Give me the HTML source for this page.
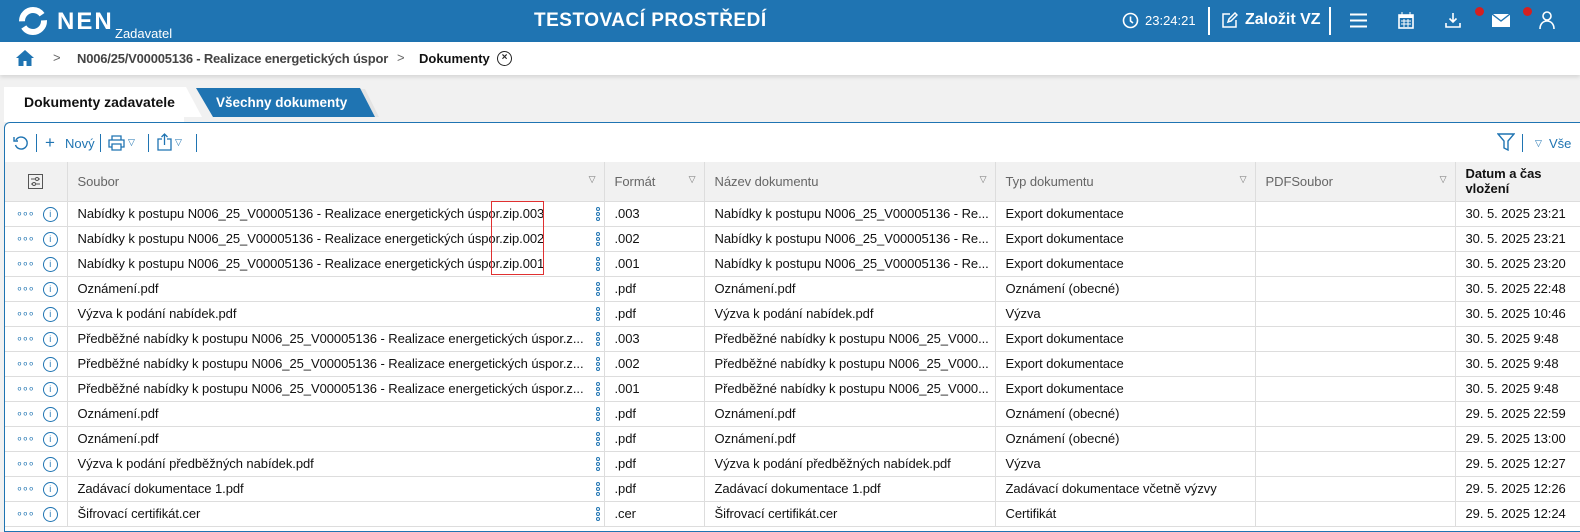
<!DOCTYPE html>
<html><head><meta charset="utf-8"><style>
*{box-sizing:border-box;margin:0;padding:0}
body{width:1580px;height:529px;overflow:hidden;background:#f1f1f1;font-family:"Liberation Sans",sans-serif;position:relative;color:#111}
.hdr{position:absolute;left:0;top:0;width:1580px;height:42px;background:#1f74b2;color:#fff}
.bc{position:absolute;left:0;top:42px;width:1580px;height:33px;background:#fff;box-shadow:0 2px 4px rgba(0,0,0,.12);font-size:13px;font-weight:bold;color:#444}
.abs{position:absolute;white-space:nowrap}
.panel{position:absolute;left:4px;top:122px;width:1580px;height:410px;background:#fff;border:1px solid #1f74b2;border-right:none;border-radius:6px 0 0 0}
table{position:absolute;left:5px;top:162px;width:1591px;border-collapse:collapse;table-layout:fixed;font-size:13px;letter-spacing:-0.06px}
td{height:25px;border-bottom:1px solid #ddd;border-right:1px solid #ddd;padding:0 0 0 10px;white-space:nowrap;overflow:hidden;position:relative}
tr.h td{height:39px;background:#f1f1f1;color:#666;border-bottom:1px solid #ddd}
.tri{position:absolute;right:8px;top:12px;font-size:9px;color:#777}
.dots{color:#1f74b2;font-size:11px;letter-spacing:-1px}
.info{display:inline-block;width:15px;height:15px;border:1px solid #1f74b2;border-radius:50%;font-size:9px;color:#1f74b2;text-align:center;line-height:13px;vertical-align:middle;margin-left:9px}
.vd{position:absolute;right:4px;top:5px;width:4px}
.vd i{display:block;width:4px;height:4px;border:1px solid #1f74b2;border-radius:50%;margin-bottom:1px}
</style></head><body>
<div class="hdr">
 <svg class="abs" style="left:18px;top:6px" width="30" height="30" viewBox="0 0 30 30"><circle cx="15" cy="15" r="11" fill="none" stroke="#fff" stroke-width="6" stroke-dasharray="28 6"/></svg>
 <div class="abs" style="left:57px;top:8px;font-size:24px;font-weight:bold;letter-spacing:2px">NEN</div>
 <div class="abs" style="left:115px;top:26px;font-size:13px">Zadavatel</div>
 <div class="abs" style="left:534px;top:10px;font-size:19px;font-weight:bold;letter-spacing:.5px">TESTOVACÍ PROSTŘEDÍ</div>
 <svg class="abs" style="left:1122px;top:12px" width="17" height="17" viewBox="0 0 17 17"><circle cx="8.5" cy="8.5" r="7" fill="none" stroke="#fff" stroke-width="1.6"/><path d="M8.5 4.5v4.5l2.5 2" fill="none" stroke="#fff" stroke-width="1.6"/></svg>
 <div class="abs" style="left:1145px;top:13px;font-size:13px">23:24:21</div>
 <div class="abs" style="left:1208px;top:7px;width:2px;height:28px;background:#fff"></div>
 <svg class="abs" style="left:1221px;top:12px" width="17" height="17" viewBox="0 0 17 17"><path d="M9 2H2v13h13V8M7 10l1-3 6-6 2 2-6 6z" fill="none" stroke="#fff" stroke-width="1.5"/></svg>
 <div class="abs" style="left:1245px;top:11px;font-size:16px;font-weight:bold">Založit VZ</div>
 <div class="abs" style="left:1329px;top:7px;width:2px;height:28px;background:#fff"></div>
 <svg class="abs" style="left:1350px;top:13px" width="17" height="15"><path d="M0 1.5h17M0 7.5h17M0 13.5h17" stroke="#fff" stroke-width="2"/></svg>
 <svg class="abs" style="left:1398px;top:12px" width="16" height="17"><rect x="1" y="3" width="14" height="13" fill="none" stroke="#fff" stroke-width="1.6"/><rect x="1" y="3" width="14" height="3" fill="#fff"/><path d="M4 0v4M12 0v4M3 9h10M3 12h10M6 7v8M10 7v8" stroke="#fff" stroke-width="1"/></svg>
 <svg class="abs" style="left:1445px;top:12px" width="16" height="17"><path d="M8 1v9M4.5 6.5L8 10l3.5-3.5M1 11v4h14v-4" fill="none" stroke="#fff" stroke-width="1.6"/></svg>
 <div class="abs" style="left:1475px;top:7px;width:9px;height:9px;border-radius:50%;background:#d42020"></div>
 <svg class="abs" style="left:1492px;top:14px" width="18" height="13"><rect x="0" y="0" width="18" height="13" fill="#fff"/><path d="M0 0l9 7 9-7" fill="none" stroke="#1f74b2" stroke-width="1.3"/></svg>
 <div class="abs" style="left:1523px;top:7px;width:9px;height:9px;border-radius:50%;background:#d42020"></div>
 <svg class="abs" style="left:1539px;top:11px" width="16" height="18"><circle cx="8" cy="5" r="4" fill="none" stroke="#fff" stroke-width="1.6"/><path d="M1 18c0-5 3-8 7-8s7 3 7 8" fill="none" stroke="#fff" stroke-width="1.6"/></svg>
</div>
<div class="bc">
 <svg class="abs" style="left:16px;top:8px" width="18" height="16"><path d="M9 0L0 8h2.5v8h5v-5h3v5h5V8H18z" fill="#1f74b2"/></svg>
 <div class="abs" style="left:53px;top:8px;color:#666;font-weight:normal">&gt;</div>
 <div class="abs" style="left:77px;top:9px;letter-spacing:-0.2px">N006/25/V00005136 - Realizace energetických úspor</div>
 <div class="abs" style="left:397px;top:8px;color:#666;font-weight:normal">&gt;</div>
 <div class="abs" style="left:419px;top:9px;color:#111">Dokumenty</div>
 <div class="abs" style="left:497px;top:9px;width:15px;height:15px;border:1.5px solid #222;border-radius:50%;font-size:10px;text-align:center;line-height:12px;color:#222">×</div>
</div>
<div class="abs" style="left:4px;top:87px;width:180px;height:35px;background:#fff"></div>
<svg class="abs" style="left:180px;top:87px" width="200" height="31"><polygon points="0,0 6,0 22,30 0,30" fill="#fff"/><polygon points="17,2 185,2 199,30 33,30" fill="#e4e4e4"/><polygon points="16,1 180,1 195,30 33,30" fill="#1f74b2"/></svg>
<div class="abs" style="left:24px;top:94px;font-size:14px;font-weight:bold">Dokumenty zadavatele</div>
<div class="abs" style="left:216px;top:95px;font-size:13.5px;font-weight:bold;color:#fff">Všechny dokumenty</div>
<div class="panel"></div>
<svg class="abs" style="left:13px;top:135px" width="16" height="16"><path d="M3 5A6 6 0 1 1 2.5 10" fill="none" stroke="#1f74b2" stroke-width="1.4"/><path d="M1 2v4h4" fill="none" stroke="#1f74b2" stroke-width="1.4"/></svg>
<div class="abs" style="left:36px;top:134px;width:1px;height:18px;background:#1f74b2"></div>
<div class="abs" style="left:45px;top:133px;font-size:17px;color:#1f74b2">+</div>
<div class="abs" style="left:65px;top:136px;font-size:13px;color:#1f74b2">Nový</div>
<div class="abs" style="left:100px;top:134px;width:1px;height:18px;background:#1f74b2"></div>
<svg class="abs" style="left:108px;top:135px" width="17" height="16"><path d="M4 5V1h9v4M4 12H1V5h15v7h-3M4 9h9v6H4z" fill="none" stroke="#1f74b2" stroke-width="1.3"/></svg>
<div class="abs" style="left:128px;top:137px;font-size:9px;color:#1f74b2">▽</div>
<div class="abs" style="left:148px;top:134px;width:1px;height:18px;background:#1f74b2"></div>
<svg class="abs" style="left:157px;top:133px" width="15" height="18"><path d="M5 6H1v11h13V6h-4M7.5 12V1M4.5 4l3-3 3 3" fill="none" stroke="#1f74b2" stroke-width="1.3"/></svg>
<div class="abs" style="left:175px;top:137px;font-size:9px;color:#1f74b2">▽</div>
<div class="abs" style="left:196px;top:134px;width:1px;height:18px;background:#1f74b2"></div>
<svg class="abs" style="left:1497px;top:133px" width="18" height="18"><path d="M1 1h16l-6 7v9l-4-2V8z" fill="none" stroke="#1f74b2" stroke-width="1.4"/></svg>
<div class="abs" style="left:1522px;top:134px;width:1px;height:18px;background:#1f74b2"></div>
<div class="abs" style="left:1535px;top:138px;font-size:9px;color:#1f74b2">▽</div>
<div class="abs" style="left:1549px;top:136px;font-size:13px;color:#1f74b2">Vše</div>
<table>
<colgroup><col style="width:62px"><col style="width:537px"><col style="width:100px"><col style="width:291px"><col style="width:260px"><col style="width:200px"><col style="width:141px"></colgroup>
<tr class="h"><td style="padding:0;text-align:center"><svg width="15" height="15" style="vertical-align:middle"><rect x=".5" y=".5" width="14" height="14" fill="none" stroke="#555"/><path d="M3 5h9M3 10h9" stroke="#555"/><circle cx="9" cy="5" r="1.5" fill="#fff" stroke="#555"/><circle cx="6" cy="10" r="1.5" fill="#fff" stroke="#555"/></svg></td>
<td>Soubor<span class="tri">▽</span></td><td>Formát<span class="tri">▽</span></td><td>Název dokumentu<span class="tri">▽</span></td><td>Typ dokumentu<span class="tri">▽</span></td><td>PDFSoubor<span class="tri">▽</span></td><td style="color:#111;font-weight:bold;line-height:15px;white-space:normal">Datum a čas<br>vložení</td></tr>
</table>
<div class="abs" style="left:491px;top:201px;width:53px;height:74px;border:1px solid #e03030"></div>
<script>
var r=[["Nabídky k postupu N006_25_V00005136 - Realizace energetických úspor.zip.003",".003","Nabídky k postupu N006_25_V00005136 - Re...","Export dokumentace","30. 5. 2025 23:21"],
["Nabídky k postupu N006_25_V00005136 - Realizace energetických úspor.zip.002",".002","Nabídky k postupu N006_25_V00005136 - Re...","Export dokumentace","30. 5. 2025 23:21"],
["Nabídky k postupu N006_25_V00005136 - Realizace energetických úspor.zip.001",".001","Nabídky k postupu N006_25_V00005136 - Re...","Export dokumentace","30. 5. 2025 23:20"],
["Oznámení.pdf",".pdf","Oznámení.pdf","Oznámení (obecné)","30. 5. 2025 22:48"],
["Výzva k podání nabídek.pdf",".pdf","Výzva k podání nabídek.pdf","Výzva","30. 5. 2025 10:46"],
["Předběžné nabídky k postupu N006_25_V00005136 - Realizace energetických úspor.z...",".003","Předběžné nabídky k postupu N006_25_V000...","Export dokumentace","30. 5. 2025 9:48"],
["Předběžné nabídky k postupu N006_25_V00005136 - Realizace energetických úspor.z...",".002","Předběžné nabídky k postupu N006_25_V000...","Export dokumentace","30. 5. 2025 9:48"],
["Předběžné nabídky k postupu N006_25_V00005136 - Realizace energetických úspor.z...",".001","Předběžné nabídky k postupu N006_25_V000...","Export dokumentace","30. 5. 2025 9:48"],
["Oznámení.pdf",".pdf","Oznámení.pdf","Oznámení (obecné)","29. 5. 2025 22:59"],
["Oznámení.pdf",".pdf","Oznámení.pdf","Oznámení (obecné)","29. 5. 2025 13:00"],
["Výzva k podání předběžných nabídek.pdf",".pdf","Výzva k podání předběžných nabídek.pdf","Výzva","29. 5. 2025 12:27"],
["Zadávací dokumentace 1.pdf",".pdf","Zadávací dokumentace 1.pdf","Zadávací dokumentace včetně výzvy","29. 5. 2025 12:26"],
["Šifrovací certifikát.cer",".cer","Šifrovací certifikát.cer","Certifikát","29. 5. 2025 12:24"]];
var t=document.querySelector('table'),h='';
r.forEach(function(x){h+='<tr><td style="padding-left:11px"><span class="dots">∘∘∘</span><span class="info">i</span></td><td>'+x[0]+'<span class="vd"><i></i><i></i><i></i></span></td><td>'+x[1]+'</td><td>'+x[2]+'</td><td>'+x[3]+'</td><td></td><td>'+x[4]+'</td></tr>';});
t.insertAdjacentHTML('beforeend',h);
</script>
</body></html>
